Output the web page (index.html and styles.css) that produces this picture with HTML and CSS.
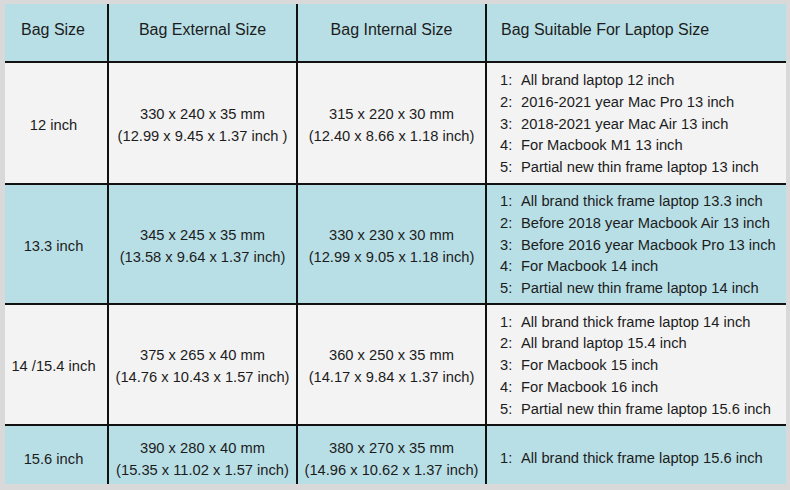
FILE: index.html
```html
<!DOCTYPE html>
<html>
<head>
<meta charset="utf-8">
<link rel="stylesheet" href="styles.css">
</head>
<body>
<div class="frame">
  <div class="grid">
    <div class="cell head c1">Bag Size</div>
    <div class="cell head c2">Bag External Size</div>
    <div class="cell head c3">Bag Internal Size</div>
    <div class="cell head c4">Bag Suitable For Laptop Size</div>

    <div class="cell light c1">12 inch</div>
    <div class="cell light dims"><span>330 x 240 x 35 mm</span><span>(12.99 x 9.45 x 1.37 inch )</span></div>
    <div class="cell light dims"><span>315 x 220 x 30 mm</span><span>(12.40 x 8.66 x 1.18 inch)</span></div>
    <div class="cell light list">
      <div class="item"><span class="n">1:</span>All brand laptop 12 inch</div>
      <div class="item"><span class="n">2:</span>2016-2021 year Mac Pro 13 inch</div>
      <div class="item"><span class="n">3:</span>2018-2021 year Mac Air 13 inch</div>
      <div class="item"><span class="n">4:</span>For Macbook M1 13 inch</div>
      <div class="item"><span class="n">5:</span>Partial new thin frame laptop 13 inch</div>
    </div>

    <div class="cell blue c1">13.3 inch</div>
    <div class="cell blue dims"><span>345 x 245 x 35 mm</span><span>(13.58 x 9.64 x 1.37 inch)</span></div>
    <div class="cell blue dims"><span>330 x 230 x 30 mm</span><span>(12.99 x 9.05 x 1.18 inch)</span></div>
    <div class="cell blue list">
      <div class="item"><span class="n">1:</span>All brand thick frame laptop 13.3 inch</div>
      <div class="item"><span class="n">2:</span>Before 2018 year Macbook Air 13 inch</div>
      <div class="item"><span class="n">3:</span>Before 2016 year Macbook Pro 13 inch</div>
      <div class="item"><span class="n">4:</span>For Macbook 14 inch</div>
      <div class="item"><span class="n">5:</span>Partial new thin frame laptop 14 inch</div>
    </div>

    <div class="cell light c1">14 /15.4 inch</div>
    <div class="cell light dims"><span>375 x 265 x 40 mm</span><span>(14.76 x 10.43 x 1.57 inch)</span></div>
    <div class="cell light dims"><span>360 x 250 x 35 mm</span><span>(14.17 x 9.84 x 1.37 inch)</span></div>
    <div class="cell light list">
      <div class="item"><span class="n">1:</span>All brand thick frame laptop 14 inch</div>
      <div class="item"><span class="n">2:</span>All brand laptop 15.4 inch</div>
      <div class="item"><span class="n">3:</span>For Macbook 15 inch</div>
      <div class="item"><span class="n">4:</span>For Macbook 16 inch</div>
      <div class="item"><span class="n">5:</span>Partial new thin frame laptop 15.6 inch</div>
    </div>

    <div class="cell blue last c1">15.6 inch</div>
    <div class="cell blue last dims"><span>390 x 280 x 40 mm</span><span>(15.35 x 11.02 x 1.57 inch)</span></div>
    <div class="cell blue last dims"><span>380 x 270 x 35 mm</span><span>(14.96 x 10.62 x 1.37 inch)</span></div>
    <div class="cell blue last list">
      <div class="item"><span class="n">1:</span>All brand thick frame laptop 15.6 inch</div>
    </div>
  </div>
</div>
</body>
</html>
```

FILE: styles.css
```css
html, body {
  margin: 0;
  padding: 0;
  background: #d9d9d9;
}
body {
  width: 790px;
  height: 490px;
  overflow: hidden;
  font-family: "Liberation Sans", Arial, sans-serif;
  font-size: 14.7px;
  color: #1c1c1c;
}
.frame {
  padding: 4px 4px 6px 5px;
}
.grid {
  display: grid;
  grid-template-columns: 102px 187px 187px 299px;
  grid-template-rows: 57px 120px 118px 119px 58px;
  gap: 2px;
  background: #111;
  width: 781px;
}
.cell {
  display: flex;
  align-items: center;
  justify-content: center;
  text-align: center;
  line-height: 22px;
}
.head {
  background: #b8dfe6;
  font-size: 16px;
  padding-bottom: 5px;
}
.light, .blue { padding-top: 3px; }
.light { background: #f3f3f3; }
.blue { background: #b8dfe6; }
.c1 { padding-right: 5px; }
.head.c1 { padding-right: 6px; }
.head.c4 { justify-content: flex-start; padding-left: 14px; }
.blue.last { padding-top: 8px; }
.dims {
  flex-direction: column;
}
.list {
  flex-direction: column;
  align-items: flex-start;
  justify-content: center;
  padding-left: 13px;
  text-align: left;
}
.item {
  display: flex;
  white-space: nowrap;
  line-height: 21.8px;
}
.n {
  width: 21px;
  flex: none;
}
```
